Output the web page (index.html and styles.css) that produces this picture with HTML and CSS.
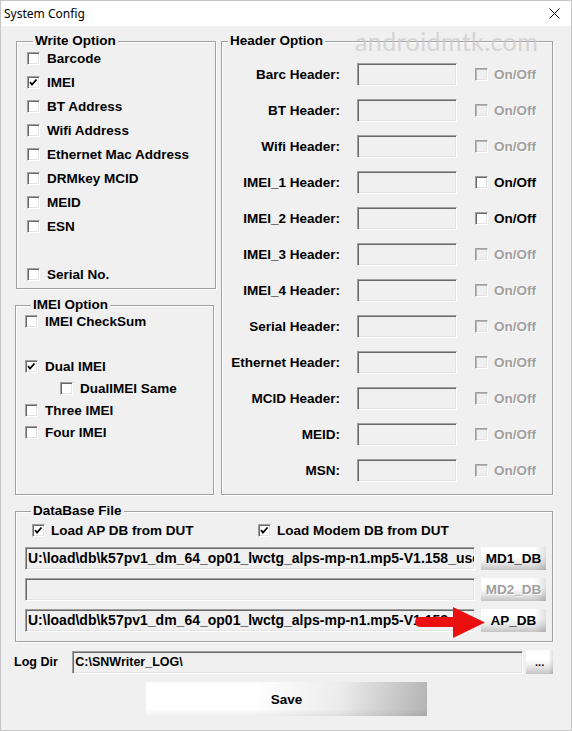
FILE: index.html
```html
<!DOCTYPE html>
<html lang="en">
<head>
  <meta charset="UTF-8" />
  <meta name="viewport" content="width=device-width, initial-scale=1.0"/>
  <title>System Config</title>
  <link rel="stylesheet" href="styles.css">
</head>
<body>
  <div class="window">
    <div class="titlebar">
      <span class="title">System Config</span>
      <svg class="close" width="11" height="11" viewBox="0 0 11 11">
        <path d="M0.5 0.5 L10.5 10.5 M10.5 0.5 L0.5 10.5" />
      </svg>
    </div>

    <div class="content">
      <div class="top">
        <div class="left-col">
          <div class="group write-group">
            <div class="legend">Write Option</div>
            <div class="row"><span class="cb"></span>Barcode</div>
            <div class="row"><span class="cb"><svg viewBox="0 0 11 11"><polyline points="2,5 4,7.5 8.5,2.5"/></svg></span>IMEI</div>
            <div class="row"><span class="cb"></span>BT Address</div>
            <div class="row"><span class="cb"></span>Wifi Address</div>
            <div class="row"><span class="cb"></span>Ethernet Mac Address</div>
            <div class="row"><span class="cb"></span>DRMkey MCID</div>
            <div class="row"><span class="cb"></span>MEID</div>
            <div class="row"><span class="cb"></span>ESN</div>
            <div class="row"></div>
            <div class="row"><span class="cb"></span>Serial No.</div>
          </div>

          <div class="group imei-group">
            <div class="legend">IMEI Option</div>
            <div class="row short"><span class="cb"></span>IMEI CheckSum</div>
            <div class="row short gap"><span class="cb"><svg viewBox="0 0 11 11"><polyline points="2,5 4,7.5 8.5,2.5"/></svg></span>Dual IMEI</div>
            <div class="row short sub"><span class="cb"></span>DualIMEI Same</div>
            <div class="row short"><span class="cb"></span>Three IMEI</div>
            <div class="row short"><span class="cb"></span>Four IMEI</div>
          </div>
        </div>

        <div class="group header-group">
          <div class="legend">Header Option</div>
          <div class="header-rows">
            <div class="hrow"><span class="hlabel">Barc Header:</span><span class="edit"></span><span class="cb off"></span><span class="onoff off">On/Off</span></div>
            <div class="hrow"><span class="hlabel">BT Header:</span><span class="edit"></span><span class="cb off"></span><span class="onoff off">On/Off</span></div>
            <div class="hrow"><span class="hlabel">Wifi Header:</span><span class="edit"></span><span class="cb off"></span><span class="onoff off">On/Off</span></div>
            <div class="hrow"><span class="hlabel">IMEI_1 Header:</span><span class="edit"></span><span class="cb"></span><span class="onoff">On/Off</span></div>
            <div class="hrow"><span class="hlabel">IMEI_2 Header:</span><span class="edit"></span><span class="cb"></span><span class="onoff">On/Off</span></div>
            <div class="hrow"><span class="hlabel">IMEI_3 Header:</span><span class="edit"></span><span class="cb off"></span><span class="onoff off">On/Off</span></div>
            <div class="hrow"><span class="hlabel">IMEI_4 Header:</span><span class="edit"></span><span class="cb off"></span><span class="onoff off">On/Off</span></div>
            <div class="hrow"><span class="hlabel">Serial Header:</span><span class="edit"></span><span class="cb off"></span><span class="onoff off">On/Off</span></div>
            <div class="hrow"><span class="hlabel">Ethernet Header:</span><span class="edit"></span><span class="cb off"></span><span class="onoff off">On/Off</span></div>
            <div class="hrow"><span class="hlabel">MCID Header:</span><span class="edit"></span><span class="cb off"></span><span class="onoff off">On/Off</span></div>
            <div class="hrow"><span class="hlabel">MEID:</span><span class="edit"></span><span class="cb off"></span><span class="onoff off">On/Off</span></div>
            <div class="hrow"><span class="hlabel">MSN:</span><span class="edit"></span><span class="cb off"></span><span class="onoff off">On/Off</span></div>
          </div>
        </div>
      </div>

      <div class="group db-group">
        <div class="legend">DataBase File</div>
        <div class="db-checks">
          <div class="db-check"><span class="cb"><svg viewBox="0 0 11 11"><polyline points="2,5 4,7.5 8.5,2.5"/></svg></span>Load AP DB from DUT</div>
          <div class="db-check"><span class="cb"><svg viewBox="0 0 11 11"><polyline points="2,5 4,7.5 8.5,2.5"/></svg></span>Load Modem DB from DUT</div>
        </div>
        <div class="db-row">
          <div class="edit path">U:\load\db\k57pv1_dm_64_op01_lwctg_alps-mp-n1.mp5-V1.158_user</div>
          <button class="skin db-btn">MD1_DB</button>
        </div>
        <div class="db-row">
          <div class="edit path"></div>
          <button class="skin db-btn disabled">MD2_DB</button>
        </div>
        <div class="db-row">
          <div class="edit path">U:\load\db\k57pv1_dm_64_op01_lwctg_alps-mp-n1.mp5-V1.158_user</div>
          <button class="skin db-btn">AP_DB</button>
        </div>
      </div>

      <div class="log-row">
        <span class="log-label">Log Dir</span>
        <div class="edit log-path">C:\SNWriter_LOG\</div>
        <button class="skin browse">...</button>
      </div>

      <div class="save-row">
        <button class="save">Save</button>
      </div>
    </div>

    <!-- pointer to the AP_DB button -->
    <svg class="arrow" width="74" height="33" viewBox="0 0 74 33">
      <rect x="1" y="11" width="42" height="10" rx="5" />
      <polygon points="39,1 71,16.5 39,32" />
    </svg>

    <div class="watermark">androidmtk.com</div>
  </div>
</body>
</html>
```

FILE: styles.css
```css
body {
  margin: 0;
  font-family: 'Liberation Sans', Arial, sans-serif;
  font-size: 13.5px;
  font-weight: bold;
  color: #000;
}

.window {
  position: relative;
  width: 572px;
  height: 731px;
  box-sizing: border-box;
  background: #f0f0f0;
  border: 1px solid #c6c6c6;
  overflow: hidden;
}

.titlebar {
  height: 25px;
  background: #fff;
  display: flex;
  align-items: center;
  justify-content: space-between;
  padding: 0 11px 0 3px;
}

.title {
  font-family: 'Noto Sans', sans-serif;
  font-size: 12px;
  font-weight: normal;
}

.close path {
  stroke: #000;
  stroke-width: 1;
  fill: none;
}

.content {
  padding: 15px 18px 0 14px;
}

/* group boxes */
.top {
  display: flex;
}

.left-col {
  width: 201px;
  display: flex;
  flex-direction: column;
}

.group {
  border: 1px solid #a0a0a0;
  box-shadow: inset 1px 1px 0 #fff, 1px 1px 0 #fff;
}

.legend {
  width: max-content;
  margin: -9px 0 -3px 6px;
  padding: 0 2px;
  line-height: 16px;
  background: #f0f0f0;
}

.write-group {
  width: 200px;
  box-sizing: border-box;
  margin-left: 1px;
  padding: 0 0 2px 10px;
}

.imei-group {
  flex: 1;
  width: 199px;
  box-sizing: border-box;
  margin-top: 16px;
  padding-left: 9px;
}

.row {
  height: 24px;
  display: flex;
  align-items: center;
}

.row .cb {
  margin-right: 7px;
}

.row.short {
  height: 22px;
}

.row.short.gap {
  margin-top: 23px;
}

.row.sub {
  padding-left: 35px;
}

.header-group {
  width: 332px;
  box-sizing: border-box;
  margin-left: 5px;
}

.header-rows {
  padding: 10px 0 6px;
}

.hrow {
  height: 36px;
  display: flex;
  align-items: center;
}

.hlabel {
  width: 118px;
  text-align: right;
  margin-right: 17px;
}

.hrow .edit {
  width: 100px;
  margin-right: 18px;
}

.hrow .cb {
  margin-right: 6px;
}

.onoff.off,
.skin.disabled {
  color: #a0a0a0;
  text-shadow: 1px 1px 0 #fff;
}

/* sunken controls */
.cb {
  width: 13px;
  height: 13px;
  box-sizing: border-box;
  flex: none;
  border: 1px solid;
  border-color: #a0a0a0 #fff #fff #a0a0a0;
  box-shadow: inset 1px 1px 0 #696969, inset -1px -1px 0 #e3e3e3;
  background: #fff;
  display: flex;
  align-items: center;
  justify-content: center;
}

.cb.off {
  background: #f0f0f0;
  box-shadow: inset 1px 1px 0 #b4b4b4, inset -1px -1px 0 #e3e3e3;
}

.cb svg {
  width: 11px;
  height: 11px;
}

.cb polyline {
  fill: none;
  stroke: #000;
  stroke-width: 1.8;
}

.edit {
  height: 23px;
  box-sizing: border-box;
  flex: none;
  border: 1px solid;
  border-color: #a0a0a0 #fff #fff #a0a0a0;
  box-shadow: inset 1px 1px 0 #696969, inset -1px -1px 0 #e3e3e3;
  background: #f0f0f0;
}

/* database file */
.db-group {
  margin-top: 16px;
  padding: 0 6px 9px 9px;
}

.db-checks {
  display: flex;
  height: 24px;
  margin-top: 2px;
  padding-left: 7px;
  align-items: center;
}

.db-check {
  width: 226px;
  display: flex;
  align-items: center;
}

.db-check .cb {
  margin-right: 6px;
}

.db-row {
  display: flex;
  margin-top: 8px;
}

.db-checks + .db-row {
  margin-top: 5px;
}

.path {
  width: 450px;
  padding-left: 2px;
  line-height: 21px;
  font-size: 14px;
  white-space: nowrap;
  overflow: hidden;
}

.skin {
  font-family: inherit;
  font-size: 13.5px;
  font-weight: bold;
  color: #000;
  padding: 0;
  border: none;
  background:
    linear-gradient(to right, rgba(0, 0, 0, 0) 82%, rgba(0, 0, 0, 0.12)),
    linear-gradient(#fff 40%, #ededed 65%, #c4c4c4);
}

.db-btn {
  width: 66px;
  height: 23px;
  margin-left: 6px;
}

/* log dir and save */
.log-row {
  display: flex;
  align-items: center;
  margin-top: 8px;
}

.log-label {
  width: 59px;
  margin-left: -1px;
  font-size: 12.5px;
}

.log-path {
  width: 451px;
  padding-left: 2px;
  line-height: 21px;
  font-size: 12.5px;
}

.browse {
  width: 27px;
  height: 24px;
  margin-left: 3px;
  font-size: 11px;
  line-height: 24px;
}

.save-row {
  margin-top: 8px;
  padding-left: 131px;
}

.save {
  width: 281px;
  height: 34px;
  border: none;
  font-family: inherit;
  font-size: 13.5px;
  font-weight: bold;
  background:
    linear-gradient(rgba(0, 0, 0, 0) 80%, rgba(0, 0, 0, 0.06)),
    linear-gradient(100deg, #fff 38%, #ececec 68%, #b3b3b3);
}

/* overlays */
.arrow {
  position: absolute;
  left: 413px;
  top: 605px;
}

.arrow rect,
.arrow polygon {
  fill: #ea1010;
}

.watermark {
  position: absolute;
  left: 354px;
  top: 25px;
  font-family: Lato, sans-serif;
  font-size: 25px;
  font-weight: normal;
  letter-spacing: 0.4px;
  color: rgba(200, 200, 200, 0.7);
}
```
